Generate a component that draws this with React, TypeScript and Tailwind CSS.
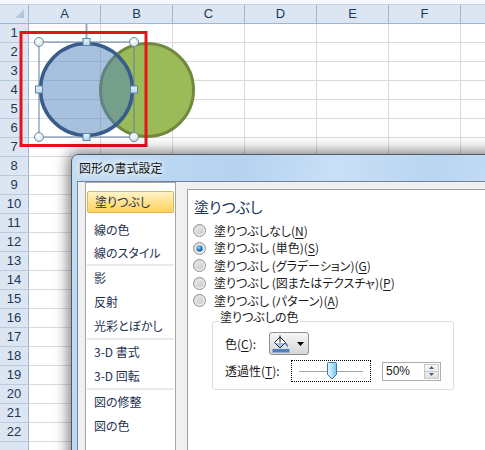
import type { ReactElement } from 'react';

const COLS = ['A', 'B', 'C', 'D', 'E', 'F'];
const ROWS = Array.from({ length: 22 }, (_, i) => i + 1);

const jp = "[font-family:'Noto_Sans_CJK_JP',sans-serif] [font-feature-settings:'palt']";

function Sheet(): ReactElement {
  return (
    <div className="flex flex-col [font-family:'Liberation_Sans',Arial,sans-serif]">
      <div className="h-[5px] shrink-0 border-b border-[#c5d3e3] bg-[#f4f7fb]" />
      <div className="flex h-[19px] shrink-0">
        <div className="relative w-[29px] shrink-0 border-r border-b border-[#9eb6ce] bg-[#dce6f2]">
          <svg width="28" height="18" viewBox="0 0 28 18" className="block">
            <defs>
              <linearGradient id="corner" x1="0" y1="0" x2="1" y2="1">
                <stop offset="0" stopColor="#d3dee9" />
                <stop offset="1" stopColor="#a9bbd0" />
              </linearGradient>
            </defs>
            <polygon points="24,4 24,13 15,13" fill="url(#corner)" />
          </svg>
        </div>
        {COLS.map((c) => (
          <div
            key={c}
            className="flex w-[72px] shrink-0 items-center justify-center border-r border-b border-[#9eb6ce] bg-[#dce6f2] text-[13px] text-[#20365a]"
          >
            {c}
          </div>
        ))}
        <div className="flex-1 border-b border-[#9eb6ce] bg-[#dce6f2]" />
      </div>
      {ROWS.map((r) => (
        <div key={r} className="flex h-[19px] shrink-0">
          <div className="flex w-[29px] shrink-0 items-center justify-center border-r border-b border-r-[#9eb6ce] border-b-[#b9cbe0] bg-[#dce6f2] text-[13px] text-[#20365a]">
            {r}
          </div>
          {COLS.map((c) => (
            <div key={c} className="w-[72px] shrink-0 border-r border-b border-[#d9dbdf]" />
          ))}
          <div className="flex-1 border-b border-[#d9dbdf]" />
        </div>
      ))}
      <div className="flex h-[19px] shrink-0">
        <div className="w-[29px] shrink-0 border-r border-[#9eb6ce] bg-[#dce6f2]" />
        {COLS.map((c) => (
          <div key={c} className="w-[72px] shrink-0 border-r border-[#d9dbdf]" />
        ))}
      </div>
    </div>
  );
}

function Shapes(): ReactElement {
  const corners: [number, number][] = [
    [39, 42],
    [134, 42],
    [39, 137],
    [134, 137],
  ];
  const sides: [number, number][] = [
    [86.5, 42],
    [39, 89.5],
    [134, 89.5],
    [86.5, 137],
  ];
  return (
    <svg
      width="485"
      height="130"
      viewBox="0 24 485 130"
      className="pointer-events-none absolute left-0 top-[24px]"
    >
      <defs>
        <radialGradient id="hc" cx="0.4" cy="0.35" r="0.7">
          <stop offset="0" stopColor="#ffffff" />
          <stop offset="1" stopColor="#cfe0e8" />
        </radialGradient>
        <linearGradient id="hs" x1="0" y1="0" x2="0" y2="1">
          <stop offset="0" stopColor="#e4f4fb" />
          <stop offset="1" stopColor="#b4d9ea" />
        </linearGradient>
      </defs>
      <line x1="86.5" y1="24" x2="86.5" y2="38" stroke="#93a8bd" strokeWidth="2" />
      <circle cx="147" cy="90" r="46.5" fill="#9bbb59" stroke="#71893f" strokeWidth="3" />
      <circle cx="86.5" cy="89.5" r="46" fill="#4f81bd" fillOpacity="0.5" stroke="#385d8a" strokeWidth="3.5" />
      <rect x="39" y="42" width="95" height="95" fill="none" stroke="#5f7fa3" strokeWidth="1" />
      {corners.map(([x, y]) => (
        <circle key={`c${x}-${y}`} cx={x} cy={y} r="4.5" fill="url(#hc)" stroke="#6d889f" strokeWidth="1" />
      ))}
      {sides.map(([x, y]) => (
        <rect key={`s${x}-${y}`} x={x - 3.5} y={y - 3.5} width="7" height="7" fill="url(#hs)" stroke="#5b86a6" strokeWidth="1" />
      ))}
      <rect x="21" y="32.5" width="125" height="113" fill="none" stroke="#e3141c" strokeWidth="3" />
    </svg>
  );
}

function Radio({ checked }: { checked?: boolean }): ReactElement {
  return (
    <svg width="13" height="13" viewBox="0 0 13 13" className="shrink-0">
      <defs>
        <linearGradient id="rbo" x1="0" y1="0" x2="1" y2="1">
          <stop offset="0" stopColor="#d4d4d4" />
          <stop offset="1" stopColor="#fbfbfb" />
        </linearGradient>
        <linearGradient id="rbi" x1="0" y1="0" x2="1" y2="1">
          <stop offset="0" stopColor="#e9e9e9" />
          <stop offset="1" stopColor="#c9c9c9" />
        </linearGradient>
        <radialGradient id="rbc" cx="0.4" cy="0.35" r="0.7">
          <stop offset="0" stopColor="#9fe0ff" />
          <stop offset="0.5" stopColor="#2a8ad4" />
          <stop offset="1" stopColor="#0b4f8c" />
        </radialGradient>
      </defs>
      <circle cx="6.5" cy="6.5" r="6" fill="url(#rbo)" stroke="#8e8f8f" strokeWidth="1" />
      <circle cx="6.5" cy="6.5" r="4" fill="url(#rbi)" />
      {checked ? <circle cx="6.5" cy="6.5" r="3" fill="url(#rbc)" /> : null}
    </svg>
  );
}

function Key({ k }: { k: string }): ReactElement {
  return <span className="underline underline-offset-2">{k}</span>;
}

const fillOptions: { label: string; key: string; checked?: boolean }[] = [
  { label: '塗りつぶしなし', key: 'N' },
  { label: '塗りつぶし (単色)', key: 'S', checked: true },
  { label: '塗りつぶし (グラデーション)', key: 'G' },
  { label: '塗りつぶし (図またはテクスチャ)', key: 'P' },
  { label: '塗りつぶし (パターン)', key: 'A' },
];

function CategoryList(): ReactElement {
  const item = 'h-[24px] pl-[8px] leading-[24px]';
  const sep = 'mx-[1px] h-[2px] bg-[#e8e8ee]';
  return (
    <div className={`ml-[7px] flex w-[91px] shrink-0 flex-col border border-[#a5a5a5] bg-white pt-[8px] text-[12px] text-[#1e3150] ${jp}`}>
      <div className="mx-[1px] h-[22px] rounded-[2px] border border-[#e0b658] bg-[linear-gradient(180deg,#fff4c8,#ffe08a_55%,#ffd25c)] pl-[7px] leading-[20px]">
        塗りつぶし
      </div>
      <div className={`mt-[5px] ${item}`}>線の色</div>
      <div className="h-[22px] pl-[8px] leading-[22px]">線のスタイル</div>
      <div className={sep} />
      <div className={item}>影</div>
      <div className={item}>反射</div>
      <div className={item}>光彩とぼかし</div>
      <div className={sep} />
      <div className={item}>3-D 書式</div>
      <div className={item}>3-D 回転</div>
      <div className={sep} />
      <div className={item}>図の修整</div>
      <div className={item}>図の色</div>
    </div>
  );
}

function BucketIcon(): ReactElement {
  return (
    <svg width="18" height="18" viewBox="0 0 18 18" className="shrink-0">
      <path d="M2.5 7.5 L8 2 L13.5 7.5 L8 13 Z" fill="#ffffff" stroke="#1a1a1a" strokeWidth="1" />
      <path d="M3.5 8 L12.5 8 L8 12.3 Z" fill="#9cc0e8" />
      <path d="M8 0.5 V7.5" stroke="#1a1a1a" strokeWidth="1" />
      <path d="M13.5 7.5 C15.5 8.5 16.3 10.5 15.8 12.5 C14.8 11 14 9.8 12.6 8.4 Z" fill="#4a7ab8" />
      <rect x="0.5" y="14" width="17" height="3.5" fill="#4f81bd" />
    </svg>
  );
}

function FillPane(): ReactElement {
  return (
    <div className={`ml-[11px] mt-[7px] flex flex-1 flex-col border-l border-t border-[#a0a0a0] bg-white ${jp}`}>
      <div className="pl-[6px] pt-[7px] text-[15px] leading-[20px] text-[#1e395b]">塗りつぶし</div>
      <div className="mt-[5px] flex flex-col pl-[5px] text-[12px] text-[#1b1b1b]">
        {fillOptions.map((o) => (
          <div key={o.key} className="flex h-[17.5px] items-center gap-[8px]">
            <Radio checked={o.checked} />
            <span className="leading-[16px]">
              {o.label}(<Key k={o.key} />)
            </span>
          </div>
        ))}
      </div>
      <div className="ml-[24px] mt-[11.5px] flex h-[69px] w-[242px] flex-col rounded-[3px] border border-[#d5dfe5] text-[12px] text-[#1b1b1b]">
        <div className="-mt-[13px] ml-[6px] w-fit bg-white px-[1px] leading-[16px]">塗りつぶしの色</div>
        <div className="mt-[7px] flex items-center pl-[12px]">
          <div className="w-[44px] shrink-0">
            色(<Key k="C" />):
          </div>
          <div className="flex h-[23px] w-[40px] items-center rounded-[3px] border border-[#8e8f8f] bg-[linear-gradient(180deg,#f6f6f6,#e6e6e6_50%,#d6d6d6)] pl-[2px]">
            <BucketIcon />
            <svg width="7" height="4" viewBox="0 0 7 4" className="ml-[7px] shrink-0">
              <polygon points="0,0 7,0 3.5,4" fill="#000" />
            </svg>
          </div>
        </div>
        <div className="mt-[5px] flex items-center pl-[12px]">
          <div className="w-[66px] shrink-0">
            透過性(<Key k="T" />):
          </div>
          <div className="relative flex h-[22px] w-[80px] shrink-0 items-center border border-dotted border-black">
            <div className="mx-[7px] h-px flex-1 bg-[#a5a5a5]" />
            <svg width="10" height="18" viewBox="0 0 10 18" className="absolute left-[35px] top-[1px]">
              <defs>
                <linearGradient id="thumb" x1="0" y1="0" x2="1" y2="0">
                  <stop offset="0" stopColor="#e6f7fe" />
                  <stop offset="0.5" stopColor="#b3e2f8" />
                  <stop offset="1" stopColor="#74c3ec" />
                </linearGradient>
              </defs>
              <path
                d="M1.5 0.5 H8.5 A1 1 0 0 1 9.5 1.5 V12.5 L5 17 L0.5 12.5 V1.5 A1 1 0 0 1 1.5 0.5 Z"
                fill="url(#thumb)"
                stroke="#3b79a9"
                strokeWidth="1"
              />
            </svg>
          </div>
          <div className="ml-[11px] flex h-[19px] w-[59px] shrink-0 border border-[#abadb3] bg-white">
            <div className="flex-1 pl-[3px] leading-[17px] [font-family:'Liberation_Sans',Arial,sans-serif]">50%</div>
            <div className="m-[1px] flex w-[15px] flex-col border border-[#c8c8c8] bg-[linear-gradient(180deg,#f7f7f7,#e2e2e2)]">
              <div className="flex flex-1 items-center justify-center border-b border-[#c8c8c8]">
                <svg width="5" height="3" viewBox="0 0 5 3">
                  <polygon points="0,3 2.5,0 5,3" fill="#4a6088" />
                </svg>
              </div>
              <div className="flex flex-1 items-center justify-center">
                <svg width="5" height="3" viewBox="0 0 5 3">
                  <polygon points="0,0 5,0 2.5,3" fill="#4a6088" />
                </svg>
              </div>
            </div>
          </div>
        </div>
      </div>
    </div>
  );
}

function FormatDialog(): ReactElement {
  return (
    <div className="absolute left-[71px] top-[154px] flex h-[320px] w-[430px] flex-col rounded-tl-[7px] border border-[#4d5b6c] bg-[linear-gradient(100deg,#c3dcf4_0%,#b5d2f0_35%,#c9e0f7_55%,#b9d5f1_75%,#cde2f7_100%)] shadow-[0_0_14px_3px_rgba(0,0,0,0.5)]">
      <div className={`flex h-[26px] shrink-0 items-center pl-[7px] text-[12px] text-[#111] [text-shadow:0_0_6px_#fff,0_0_10px_#fff] ${jp}`}>
        図形の書式設定
      </div>
      <div className="flex flex-1 pl-[5px]">
        <div className="flex flex-1 border-l border-t border-[#71849b] bg-[#f0f0f0]">
          <CategoryList />
          <FillPane />
        </div>
      </div>
    </div>
  );
}

export default function App(): ReactElement {
  return (
    <div className="relative h-[450px] w-[485px] overflow-hidden bg-white">
      <Sheet />
      <Shapes />
      <FormatDialog />
    </div>
  );
}
